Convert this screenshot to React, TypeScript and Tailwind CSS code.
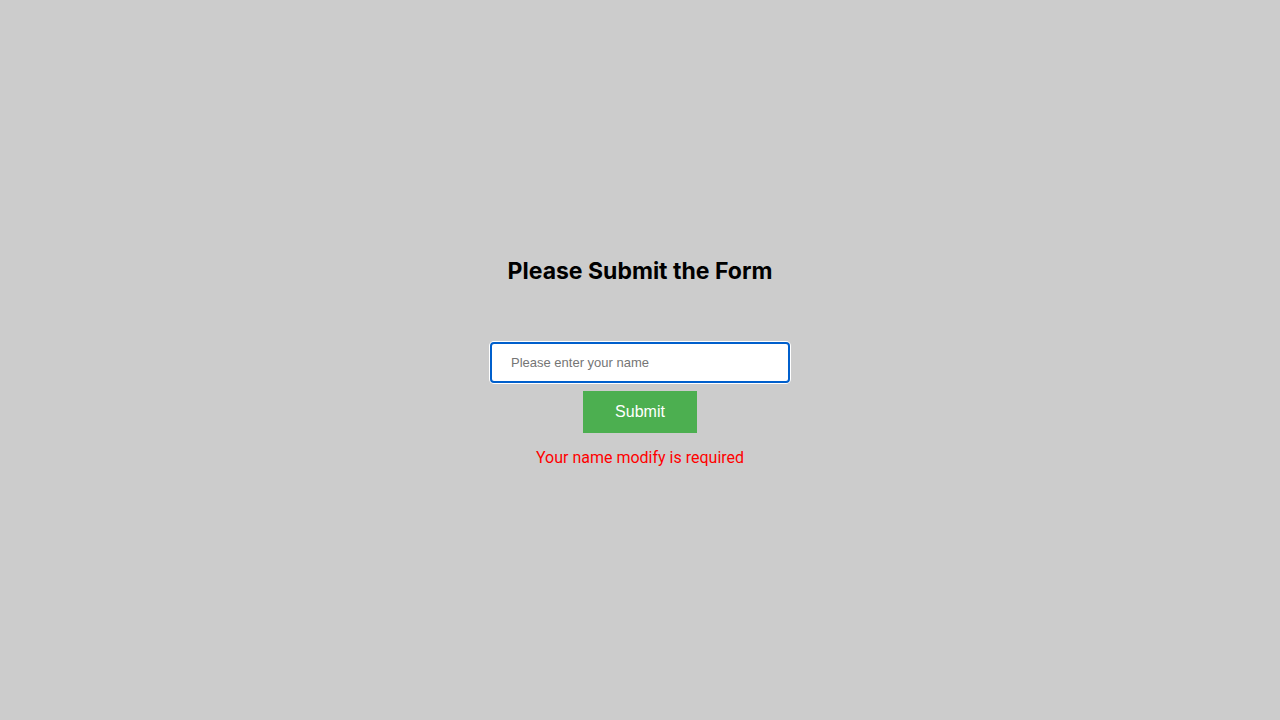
import React, { useState } from 'react';

const App: React.FC = () => {
    const [name, setName] = useState('');

    return (
        <div className="min-h-screen w-full bg-[#cccccc] flex flex-col items-center justify-center pt-[4px] font-['Inter',sans-serif]">
            <h2 className="text-[23px] font-bold text-black leading-[28px]">Please Submit the Form</h2>
            <form className="mt-[57px] flex flex-col items-center" onSubmit={(e) => e.preventDefault()}>
                <input
                    type="text"
                    value={name}
                    onChange={(e) => setName(e.target.value)}
                    placeholder="Please enter your name"
                    className="w-[300px] h-[41px] bg-white border-2 border-[#005fcc] rounded-[4px] shadow-[0_0_0_1px_#ffffff] pl-[19px] text-[13px] font-['Liberation_Sans',Arial,sans-serif] text-black placeholder:text-[#757575] outline-none"
                />
                <button
                    type="submit"
                    className="mt-[8px] w-[114px] h-[42px] bg-[#4caf50] text-white text-[16px] font-['Liberation_Sans',Arial,sans-serif]"
                >
                    Submit
                </button>
                <p className="mt-[15px] text-[16px] leading-[20px] text-[#ff0000] font-['Roboto',sans-serif]">Your name modify is required</p>
            </form>
        </div>
    );
};

export default App;
